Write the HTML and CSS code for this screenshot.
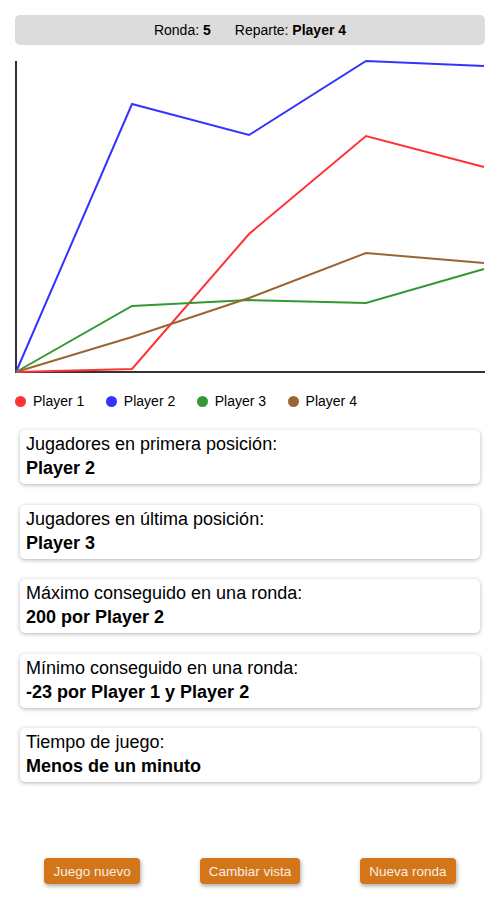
FILE: index.html
```html
<!DOCTYPE html>
<html lang="es">
<head>
<meta charset="utf-8">
<link rel="stylesheet" href="styles.css">
</head>
<body>
<div class="page">
  <div class="header">
    <span>Ronda: <b>5</b></span>
    <span>Reparte: <b>Player 4</b></span>
  </div>
  <svg class="chart" width="500" height="336" viewBox="0 0 500 336">
    <line x1="16" y1="16" x2="16" y2="328" stroke="#333" stroke-width="2"/>
    <line x1="15" y1="327" x2="485" y2="327" stroke="#333" stroke-width="2"/>
    <polyline fill="none" stroke="#3333ff" stroke-width="2" points="16,327 132,59 249,90 366,16 484,21"/>
    <polyline fill="none" stroke="#ff3333" stroke-width="2" points="16,327 132,324 249,189 366,91 484,122"/>
    <polyline fill="none" stroke="#339933" stroke-width="2" points="16,327 132,261 249,255 366,258 484,224"/>
    <polyline fill="none" stroke="#996633" stroke-width="2" points="16,327 132,292 249,253 366,208 484,218"/>
  </svg>
  <div class="legend">
    <div class="item"><span class="dot red"></span>Player 1</div>
    <div class="item"><span class="dot blue"></span>Player 2</div>
    <div class="item"><span class="dot green"></span>Player 3</div>
    <div class="item"><span class="dot brown"></span>Player 4</div>
  </div>
  <div class="cards">
    <div class="card"><div>Jugadores en primera posición:</div><div class="val">Player 2</div></div>
    <div class="card"><div>Jugadores en última posición:</div><div class="val">Player 3</div></div>
    <div class="card"><div>Máximo conseguido en una ronda:</div><div class="val">200 por Player 2</div></div>
    <div class="card"><div>Mínimo conseguido en una ronda:</div><div class="val">-23 por Player 1 y Player 2</div></div>
    <div class="card"><div>Tiempo de juego:</div><div class="val">Menos de un minuto</div></div>
  </div>
  <div class="buttons">
    <button class="btn">Juego nuevo</button>
    <button class="btn">Cambiar vista</button>
    <button class="btn">Nueva ronda</button>
  </div>
</div>
</body>
</html>
```
FILE: styles.css
```css
html, body {
  margin: 0;
  padding: 0;
  background: #fff;
}
body {
  font-family: "Liberation Sans", Arial, sans-serif;
  color: #000;
}
.page {
  width: 500px;
  height: 900px;
  display: flex;
  flex-direction: column;
}
.header {
  margin: 15px 15px 0;
  height: 30px;
  background: #dcdcdc;
  border-radius: 5px;
  display: flex;
  justify-content: center;
  align-items: center;
  gap: 24px;
  font-size: 14px;
}
.chart {
  display: block;
}
.legend {
  display: flex;
  align-items: center;
  height: 20px;
  margin-top: 10px;
  padding-left: 15px;
  font-size: 14px;
  gap: 21.5px;
}
.item {
  display: flex;
  align-items: center;
  gap: 7px;
}
.dot {
  width: 11px;
  height: 11px;
  border-radius: 50%;
  display: inline-block;
}
.red { background: #ff3333; }
.blue { background: #3333ff; }
.green { background: #339933; }
.brown { background: #996633; }
.cards {
  display: flex;
  flex-direction: column;
  gap: 20.5px;
  margin: 19px 20px 0;
}
.card {
  background: #fff;
  border-radius: 5px;
  box-shadow: 0 1px 4px rgba(0,0,0,0.3);
  padding: 2px 6px 4px;
  font-size: 18px;
  line-height: 24px;
  height: 48px;
}
.val {
  font-weight: bold;
}
.buttons {
  margin-top: auto;
  margin-bottom: 16px;
  display: flex;
  justify-content: center;
  gap: 60px;
}
.btn {
  font-family: "Liberation Sans", Arial, sans-serif;
  font-size: 13.5px;
  background: #d37519;
  color: #f8eee4;
  border: none;
  border-radius: 4px;
  height: 26px;
  padding: 0 9px;
  box-shadow: 1px 2px 4px rgba(0,0,0,0.35);
}
```
